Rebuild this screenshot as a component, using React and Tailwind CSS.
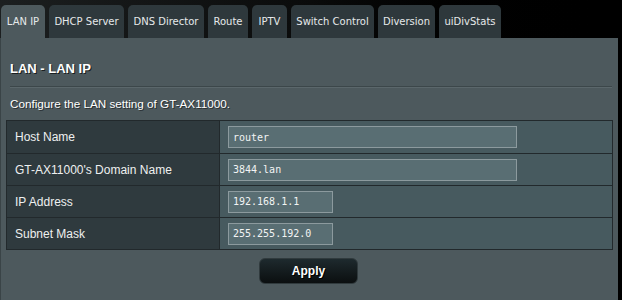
import React from 'react';

const tabs = [
  { label: 'LAN IP', w: 'w-[44px]', active: true },
  { label: 'DHCP Server', w: 'w-[75px]' },
  { label: 'DNS Director', w: 'w-[76px]' },
  { label: 'Route', w: 'w-[40px]' },
  { label: 'IPTV', w: 'w-[35px]' },
  { label: 'Switch Control', w: 'w-[83px]' },
  { label: 'Diversion', w: 'w-[57px]' },
  { label: 'uiDivStats', w: 'w-[62px]' },
];

const rows = [
  { label: 'Host Name', value: 'router', wide: true },
  { label: "GT-AX11000's Domain Name", value: '3844.lan', wide: true },
  { label: 'IP Address', value: '192.168.1.1' },
  { label: 'Subnet Mask', value: '255.255.192.0' },
];

export default function App() {
  return (
    <div className="w-[622px] h-[300px] overflow-hidden bg-black font-['Liberation_Sans',Arial,sans-serif]">
      {/* Tabs */}
      <div className="flex gap-[4px] pl-[1px] pt-[5px] h-[38px] bg-gradient-to-r from-[#1c1f20] via-[#0a0b0b] to-black">
        {tabs.map((t) => (
          <div
            key={t.label}
            className={`${t.w} h-[33px] rounded-t-[5px] flex items-center justify-center text-[10px] font-['DejaVu_Sans',Verdana,sans-serif] text-[#e6e9ea] whitespace-nowrap ${
              t.active ? 'bg-[#4d595d]' : 'bg-[#2e383c]'
            }`}
          >
            {t.label}
          </div>
        ))}
      </div>

      {/* Panel */}
      <div className="w-[618px] h-[262px] bg-[#4d595d] border-l border-[#3a4447] pt-[21px]">
        <h1 className="ml-[9px] text-[13px] leading-[20px] font-bold text-white [text-shadow:1px_1px_0_#1a1f21]">
          LAN - LAN IP
        </h1>
        <div className="ml-[9px] mr-[6px] mt-[7px] h-[2px] bg-[#3c474a] border-b border-[#5b676b]" />
        <p className="ml-[9px] mt-[8px] text-[11.7px] leading-[16px] text-white [text-shadow:1px_1px_0_#2a3133]">
          Configure the LAN setting of GT-AX11000.
        </p>

        <div className="ml-[5px] mt-[8px] w-[607px] border border-[#22292c]">
          {rows.map((r, i) => (
            <div
              key={r.label}
              className={`flex h-[32px] ${i > 0 ? 'border-t border-[#22292c]' : ''}`}
            >
              <div className="w-[213px] bg-[#2f3a3e] border-r border-[#22292c] flex items-center pl-[8px] text-[12px] text-[#eef0f0]">
                {r.label}
              </div>
              <div className="flex-1 bg-[#475a5f] flex items-center pl-[8px]">
                <div
                  className={`${r.wide ? 'w-[289px]' : 'w-[105px]'} h-[22px] bg-[#596e73] border border-[#8c9a9e] flex items-center pl-[4px] text-[10px] text-[#f2f4f4] font-['DejaVu_Sans_Mono',monospace]`}
                >
                  {r.value}
                </div>
              </div>
            </div>
          ))}
        </div>

        <div className="flex justify-center mt-[8px] pr-[2px]">
          <button className="w-[99px] h-[26px] rounded-[6px] bg-gradient-to-b from-[#1e2a2e] to-[#0b0f10] border border-[#303a3d] text-white text-[12px] font-bold [text-shadow:1px_1px_0_#000]">
            Apply
          </button>
        </div>
      </div>
    </div>
  );
}
